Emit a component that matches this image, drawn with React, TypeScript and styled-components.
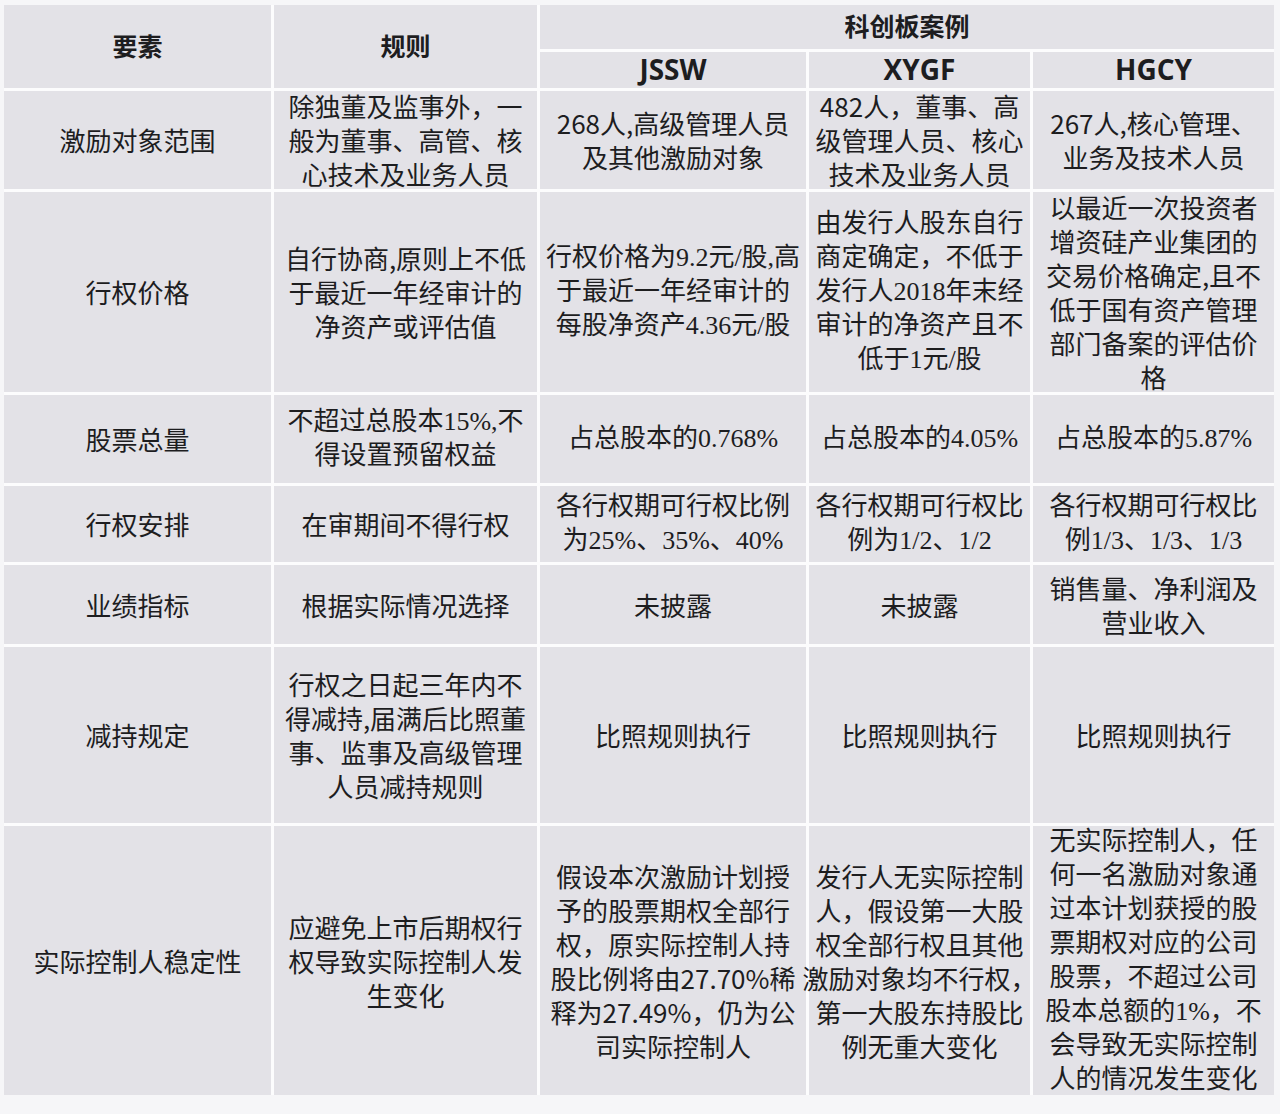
import React from 'react'
import styled, { createGlobalStyle } from 'styled-components'

const GlobalStyle = createGlobalStyle`
  html, body {
    margin: 0;
    padding: 0;
    background: #f6f6f8;
  }
  body {
    font-family: 'Noto Sans CJK SC', 'Noto Sans', sans-serif;
    color: #1d1d1f;
  }
`

const Page = styled.div`
  width: 1280px;
  height: 1114px;
  padding: 5px 0 0 4px;
  box-sizing: border-box;
`

const Grid = styled.div`
  display: grid;
  grid-template-columns: 267px 263px 266px 221px 241px;
  grid-template-rows: 44px 36px 98px 200px 88px 76px 79px 176px 269px;
  gap: 3px;
  width: 1270px;
  background: #fcfcfd;
`

const Cell = styled.div<{ $col?: string; $row?: string; $serif?: boolean }>`
  grid-column: ${({ $col }) => $col || 'auto'};
  grid-row: ${({ $row }) => $row || 'auto'};
  background: #e3e2e7;
  display: flex;
  align-items: center;
  justify-content: center;
  font-family: ${({ $serif }) =>
    $serif
      ? "'Liberation Serif', 'Noto Sans CJK SC', serif"
      : "'Noto Sans CJK SC', 'Noto Sans', sans-serif"};
  font-size: 26px;
  line-height: 34px;
  min-width: 0;
`

const Lines = styled.div`
  text-align: center;
  white-space: nowrap;
  flex-shrink: 0;
`

const HeadCell = styled(Cell)`
  font-weight: 700;
  font-size: 25px;
  line-height: 30px;
  padding-bottom: 4px;
`

const CodeCell = styled(Cell)`
  font-family: 'Open Sans', 'Noto Sans', sans-serif;
  font-weight: 700;
  font-size: 28px;
  line-height: 32px;
  padding-bottom: 2px;
`

type Row = {
  label: string
  cells: { lines: string[]; serif?: boolean }[]
}

const rows: Row[] = [
  {
    label: '激励对象范围',
    cells: [
      { lines: ['除独董及监事外，一', '般为董事、高管、核', '心技术及业务人员'] },
      { lines: ['268人,高级管理人员', '及其他激励对象'] },
      { lines: ['482人，董事、高', '级管理人员、核心', '技术及业务人员'] },
      { lines: ['267人,核心管理、', '业务及技术人员'] },
    ],
  },
  {
    label: '行权价格',
    cells: [
      { lines: ['自行协商,原则上不低', '于最近一年经审计的', '净资产或评估值'] },
      { lines: ['行权价格为9.2元/股,高', '于最近一年经审计的', '每股净资产4.36元/股'], serif: true },
      {
        lines: ['由发行人股东自行', '商定确定，不低于', '发行人2018年末经', '审计的净资产且不', '低于1元/股'],
        serif: true,
      },
      {
        lines: ['以最近一次投资者', '增资硅产业集团的', '交易价格确定,且不', '低于国有资产管理', '部门备案的评估价', '格'],
      },
    ],
  },
  {
    label: '股票总量',
    cells: [
      { lines: ['不超过总股本15%,不', '得设置预留权益'], serif: true },
      { lines: ['占总股本的0.768%'], serif: true },
      { lines: ['占总股本的4.05%'], serif: true },
      { lines: ['占总股本的5.87%'], serif: true },
    ],
  },
  {
    label: '行权安排',
    cells: [
      { lines: ['在审期间不得行权'] },
      { lines: ['各行权期可行权比例', '为25%、35%、40%'], serif: true },
      { lines: ['各行权期可行权比', '例为1/2、1/2'], serif: true },
      { lines: ['各行权期可行权比', '例1/3、1/3、1/3'], serif: true },
    ],
  },
  {
    label: '业绩指标',
    cells: [
      { lines: ['根据实际情况选择'] },
      { lines: ['未披露'] },
      { lines: ['未披露'] },
      { lines: ['销售量、净利润及', '营业收入'] },
    ],
  },
  {
    label: '减持规定',
    cells: [
      { lines: ['行权之日起三年内不', '得减持,届满后比照董', '事、监事及高级管理', '人员减持规则'] },
      { lines: ['比照规则执行'] },
      { lines: ['比照规则执行'] },
      { lines: ['比照规则执行'] },
    ],
  },
  {
    label: '实际控制人稳定性',
    cells: [
      { lines: ['应避免上市后期权行', '权导致实际控制人发', '生变化'] },
      {
        lines: [
          '假设本次激励计划授',
          '予的股票期权全部行',
          '权，原实际控制人持',
          '股比例将由27.70%稀',
          '释为27.49%，仍为公',
          '司实际控制人',
        ],
      },
      {
        lines: ['发行人无实际控制', '人，假设第一大股', '权全部行权且其他', '激励对象均不行权，', '第一大股东持股比', '例无重大变化'],
      },
      {
        lines: [
          '无实际控制人，任',
          '何一名激励对象通',
          '过本计划获授的股',
          '票期权对应的公司',
          '股票，不超过公司',
          '股本总额的1%，不',
          '会导致无实际控制',
          '人的情况发生变化',
        ],
        serif: true,
      },
    ],
  },
]

function TextLines({ lines }: { lines: string[] }) {
  return (
    <Lines>
      {lines.map((line, i) => (
        <React.Fragment key={i}>
          {i > 0 && <br />}
          {line}
        </React.Fragment>
      ))}
    </Lines>
  )
}

export default function App() {
  return (
    <>
      <GlobalStyle />
      <Page>
        <Grid>
          <HeadCell $col="1" $row="1 / span 2">要素</HeadCell>
          <HeadCell $col="2" $row="1 / span 2">规则</HeadCell>
          <HeadCell $col="3 / span 3" $row="1">科创板案例</HeadCell>
          <CodeCell $col="3" $row="2">JSSW</CodeCell>
          <CodeCell $col="4" $row="2">XYGF</CodeCell>
          <CodeCell $col="5" $row="2">HGCY</CodeCell>
          {rows.map((row) => (
            <React.Fragment key={row.label}>
              <Cell>
                <TextLines lines={[row.label]} />
              </Cell>
              {row.cells.map((c, i) => (
                <Cell key={i} $serif={c.serif}>
                  <TextLines lines={c.lines} />
                </Cell>
              ))}
            </React.Fragment>
          ))}
        </Grid>
      </Page>
    </>
  )
}
